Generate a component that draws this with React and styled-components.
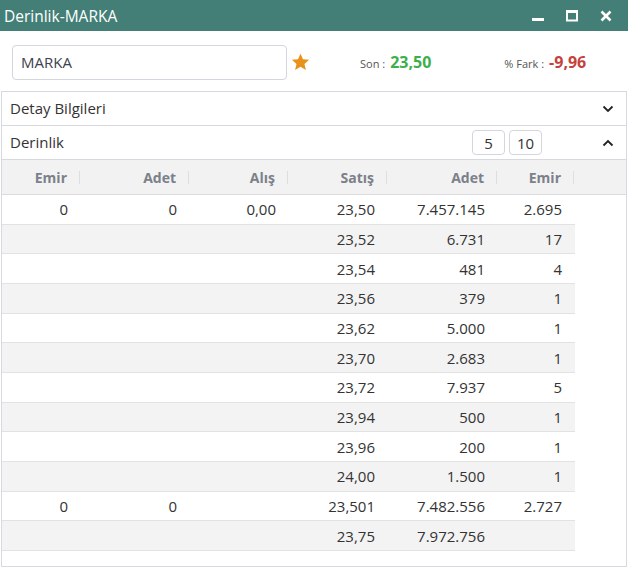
import React from "react";
import styled, { createGlobalStyle } from "styled-components";

const Global = createGlobalStyle`
  body {
    margin: 0;
    background: #fff;
    font-family: "Open Sans", "Noto Sans", sans-serif;
    color: #333;
  }
`;

/**
 * UI
 */
const Window = styled.div`
  width: 628px;
  height: 570px;
  background: #fff;
  overflow: hidden;
`;

const TitleBar = styled.div`
  height: 31px;
  background: #437f77;
  color: #fff;
  display: flex;
  align-items: center;
  padding-left: 4px;
  font-size: 15.5px;
`;

const Title = styled.span`
  flex: 1;
`;

const WinButtons = styled.div`
  display: flex;
  align-items: center;
  gap: 22px;
  padding-right: 16px;
`;

const Toolbar = styled.div`
  display: flex;
  align-items: center;
  height: 60px;
  padding: 0 12px;
`;

const SymbolInput = styled.div`
  width: 265px;
  height: 33px;
  border: 1px solid #d3d6de;
  border-radius: 4px;
  display: flex;
  align-items: center;
  padding-left: 8px;
  box-sizing: content-box;
  font-size: 15px;
  color: #3c4350;
  margin-top: 2px;
`;

const Star = styled.svg`
  margin-left: 4px;
  margin-top: 2px;
`;

const Stat = styled.div`
  display: flex;
  align-items: baseline;
  margin-left: ${(p) => p.offset}px;
  margin-top: 2px;
`;

const StatLabel = styled.span`
  font-size: 11px;
  color: #555;
  margin-right: 5px;
`;

const StatValue = styled.span`
  font-size: 16px;
  font-weight: 700;
  color: ${(p) => p.color};
`;

const Panel = styled.div`
  margin: 0 1px 0 1px;
  border: 1px solid #d6d9e0;
  height: 476px;
  box-sizing: border-box;
`;

const SectionHead = styled.div`
  display: flex;
  align-items: center;
  height: 34px;
  padding: 0 8px 0 8px;
  border-bottom: 1px solid #d6d9e0;
  font-size: 15px;
  color: #333;
  box-sizing: border-box;
`;

const SectionTitle = styled.span`
  flex: 1;
  margin-top: -1px;
`;

const PageButton = styled.button`
  width: 33px;
  height: 25px;
  margin-left: 4px;
  border: 1px solid #d3d6de;
  border-radius: 4px;
  background: #fff;
  font-family: inherit;
  font-size: 15px;
  color: #333;
  padding: 0;
`;

const Spacer = styled.span`
  width: 60px;
`;

const HeaderRow = styled.div`
  display: grid;
  grid-template-columns: 78px 109px 99px 99px 110px 77px 1fr;
  height: 35px;
  background: #f2f2f2;
  border-bottom: 1px solid #dcdcdc;
  box-sizing: border-box;
`;

const HeadCell = styled.div`
  display: flex;
  align-items: center;
  justify-content: flex-end;
  padding-right: 13px;
  font-size: 14px;
  font-weight: 700;
  color: #7b808a;
  position: relative;
  &::after {
    content: "";
    position: absolute;
    right: 0;
    top: 11px;
    height: 13px;
    width: 1px;
    background: #dedede;
  }
`;

const Rows = styled.div`
  width: 573px;
`;

const Row = styled.div`
  display: grid;
  grid-template-columns: 78px 109px 99px 99px 110px 77px;
  height: 29.67px;
  box-sizing: border-box;
  border-bottom: 1px solid #e2e2e2;
  background: ${(p) => (p.striped ? "#f3f3f3" : "#fff")};
`;

const Cell = styled.div`
  display: flex;
  align-items: center;
  justify-content: flex-end;
  padding-right: 12px;
  font-size: 15px;
  color: #333;
`;

const rows = [
  ["0", "0", "0,00", "23,50", "7.457.145", "2.695"],
  ["", "", "", "23,52", "6.731", "17"],
  ["", "", "", "23,54", "481", "4"],
  ["", "", "", "23,56", "379", "1"],
  ["", "", "", "23,62", "5.000", "1"],
  ["", "", "", "23,70", "2.683", "1"],
  ["", "", "", "23,72", "7.937", "5"],
  ["", "", "", "23,94", "500", "1"],
  ["", "", "", "23,96", "200", "1"],
  ["", "", "", "24,00", "1.500", "1"],
  ["0", "0", "", "23,501", "7.482.556", "2.727"],
  ["", "", "", "23,75", "7.972.756", ""],
];

const ChevronIcon = ({ up }) => (
  <svg width="12" height="8" viewBox="0 0 12 8" style={{ marginRight: 4 }}>
    <polyline
      points={up ? "1.5,6.5 6,2 10.5,6.5" : "1.5,1.5 6,6 10.5,1.5"}
      fill="none"
      stroke="#222"
      strokeWidth="1.8"
    />
  </svg>
);

export default function App() {
  return (
    <Window>
      <Global />
      <TitleBar>
        <Title>Derinlik-MARKA</Title>
        <WinButtons>
          <svg width="12" height="12" viewBox="0 0 12 12">
            <rect x="0" y="8" width="12" height="3" fill="#fff" />
          </svg>
          <svg width="12" height="12" viewBox="0 0 12 12">
            <rect x="1" y="1.5" width="10" height="9" fill="none" stroke="#fff" strokeWidth="2" />
            <rect x="0" y="0" width="12" height="3" fill="#fff" />
          </svg>
          <svg width="12" height="12" viewBox="0 0 12 12">
            <path d="M1.5 1.5 L10.5 10.5 M10.5 1.5 L1.5 10.5" stroke="#fff" strokeWidth="2.6" />
          </svg>
        </WinButtons>
      </TitleBar>

      <Toolbar>
        <SymbolInput>MARKA</SymbolInput>
        <Star width="19" height="18" viewBox="0 0 24 23">
          <path
            d="M12 0.8 L15.2 8 L23 8.7 L17.1 13.9 L18.9 21.6 L12 17.5 L5.1 21.6 L6.9 13.9 L1 8.7 L8.8 8 Z"
            fill="#e8921c"
          />
        </Star>
        <Stat offset={50}>
          <StatLabel>Son :</StatLabel>
          <StatValue color="#3daf4b">23,50</StatValue>
        </Stat>
        <Stat offset={73}>
          <StatLabel>% Fark :</StatLabel>
          <StatValue color="#c6413b">-9,96</StatValue>
        </Stat>
      </Toolbar>

      <Panel>
        <SectionHead>
          <SectionTitle>Detay Bilgileri</SectionTitle>
          <ChevronIcon />
        </SectionHead>
        <SectionHead>
          <SectionTitle>Derinlik</SectionTitle>
          <PageButton>5</PageButton>
          <PageButton>10</PageButton>
          <Spacer />
          <ChevronIcon up />
        </SectionHead>
        <HeaderRow>
          {["Emir", "Adet", "Alış", "Satış", "Adet", "Emir"].map((h, i) => (
            <HeadCell key={i}>{h}</HeadCell>
          ))}
          <div />
        </HeaderRow>
        <Rows>
          {rows.map((r, i) => (
            <Row key={i} striped={i % 2 === 1}>
              {r.map((c, j) => (
                <Cell key={j}>{c}</Cell>
              ))}
            </Row>
          ))}
        </Rows>
      </Panel>
    </Window>
  );
}
